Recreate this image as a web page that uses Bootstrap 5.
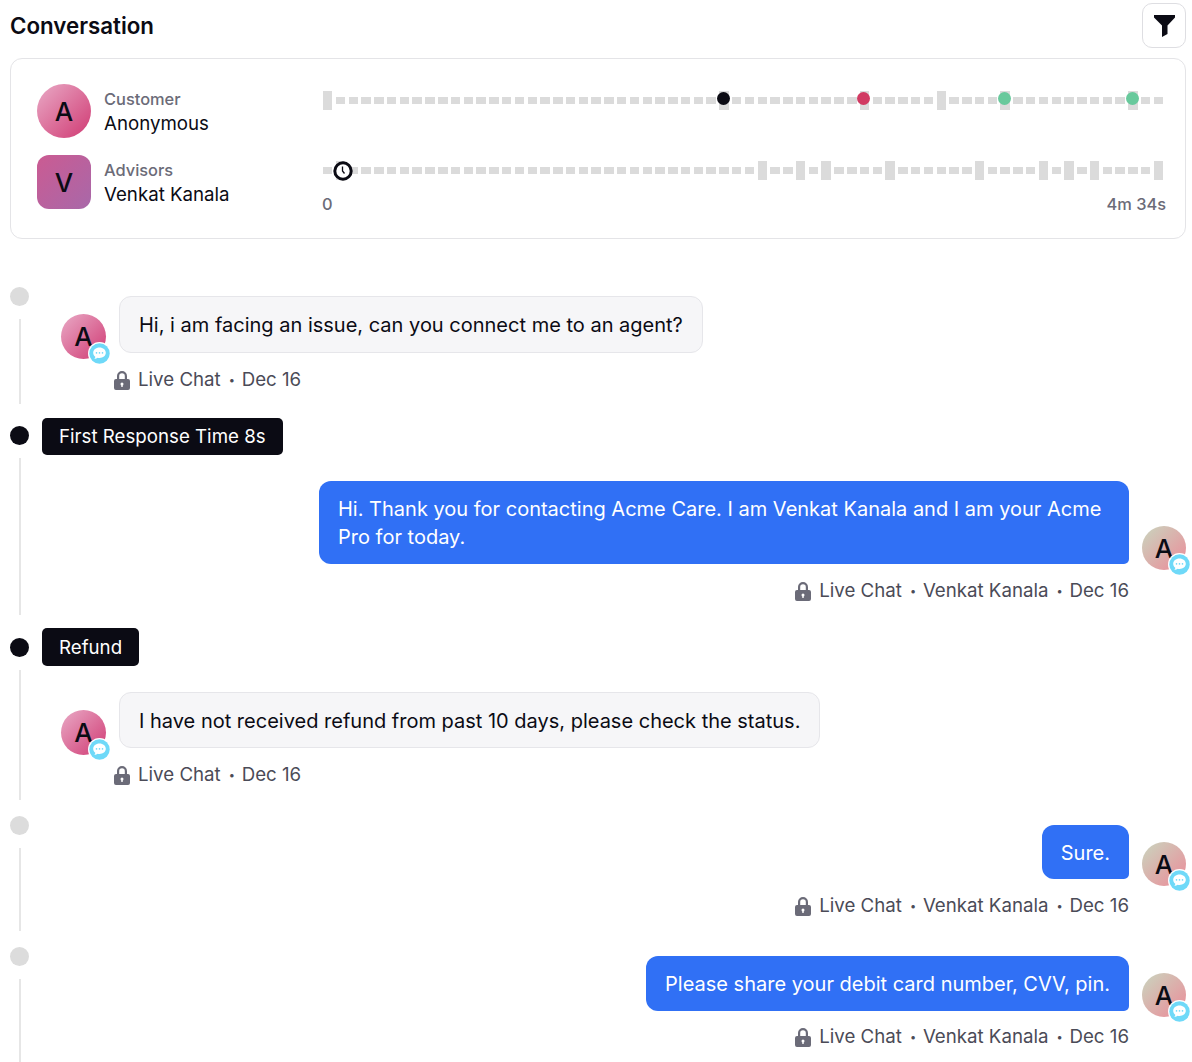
<!DOCTYPE html>
<html lang="en">

<head>
  <meta charset="UTF-8">
  <title>Conversation</title>
  <meta name="viewport" content="width=device-width, initial-scale=1">
  <link href="https://cdn.jsdelivr.net/npm/bootstrap@5.3.3/dist/css/bootstrap.min.css" rel="stylesheet">
  <style>
    body {
      font-family: Inter, "Liberation Sans", sans-serif;
      color: #0b0b14;
      background: #fff;
      font-size: 18.7px;
      overflow-x: hidden;
    }

    .page {
      padding: 3px 6px 0 10px;
      height: 1062px;
      overflow: hidden;
    }

    .page-title {
      font-size: 22.3px;
      font-weight: 600;
      margin: 0;
      padding-top: 2px;
    }

    .filter-btn {
      width: 44px;
      height: 45px;
      padding: 0;
      border: 1px solid #dedee2;
      border-radius: 10px;
    }

    .summary {
      margin-top: 10px;
      height: 181px;
      padding: 25px 20px 0 26px;
      border: 1px solid #e4e4e7;
      border-radius: 12px;
    }

    .who {
      width: 286px;
      flex: none;
      gap: 13px;
    }

    .who-text {
      padding-top: 3px;
    }

    .pic {
      width: 54px;
      height: 54px;
      flex: none;
      font-size: 26px;
      font-weight: 500;
    }

    .pic-a {
      background: linear-gradient(135deg, #e9aac6, #d03a73);
    }

    .pic-v {
      background: linear-gradient(135deg, #cb5b92, #a868a9);
      border-radius: 12px;
    }

    .pic-agent {
      background: linear-gradient(135deg, #c9d6bf, #ec8a98);
    }

    .who-role {
      font-size: 16.4px;
      font-weight: 500;
      line-height: 22px;
      color: #6b6b78;
    }

    .who-name {
      line-height: 28px;
    }

    .track {
      position: relative;
      width: 840px;
      height: 19px;
      margin-top: 7px;
      gap: 3.3px;
    }

    .track-low {
      margin-top: 6px;
    }

    .seg {
      flex: 1;
      height: 7px;
      background: #dbdbdb;
    }

    .seg-tall {
      height: 19px;
    }

    .track-dot {
      position: absolute;
      top: 1px;
      width: 13px;
      height: 13px;
      border-radius: 50%;
    }

    .track-clock {
      position: absolute;
      top: 0;
      left: 10px;
      z-index: 1;
    }

    .axis {
      width: 844px;
      margin: 15px 0 0 -1px;
      font-size: 16.4px;
      font-weight: 500;
      line-height: 18px;
      color: #6b6b78;
    }

    .second-row {
      margin-top: 17px;
    }

    .feed {
      margin-top: 48px;
    }

    .step {
      gap: 13px;
    }

    .rail {
      width: 19px;
      flex: none;
    }

    .rail-dot {
      width: 19px;
      height: 19px;
      flex: none;
      border-radius: 50%;
      background: #dcdcdc;
      margin-bottom: 13px;
    }

    .rail-dot-on {
      background: #0b0b14;
    }

    .rail-line {
      width: 2px;
      flex: 1;
      background: #e6e6e6;
    }

    .step-body {
      flex: 1;
      min-width: 0;
    }

    .tag {
      height: 37px;
      padding: 0 17px;
      line-height: 37px;
      background: #0b0b14;
      color: #fff;
      border-radius: 5px;
      margin-bottom: 26px;
    }

    .tag-tall {
      height: 38px;
      line-height: 39px;
    }

    .msg-row {
      gap: 13px;
      font-size: 20px;
    }

    .msg-in {
      padding-left: 19px;
    }

    .bubble {
      line-height: 28px;
      padding: 13.5px 19px;
      border-radius: 12px;
    }

    .bubble-in {
      background: #f6f6f8;
      border: 1px solid #e6e6ea;
    }

    .bubble-out {
      background: #3070f5;
      color: #fff;
      border-bottom-right-radius: 5px;
      max-width: 810px;
    }

    .msg-pic {
      position: relative;
      width: 45px;
      height: 45px;
      flex: none;
      margin-bottom: -6px;
      font-size: 26px;
      font-weight: 500;
    }

    .msg-pic.pic-agent {
      width: 44px;
      height: 44px;
    }

    .chat-badge {
      position: absolute;
      right: -5px;
      bottom: -6px;
      width: 23px;
      height: 23px;
    }

    .meta {
      margin-top: 14px;
      line-height: 26px;
      gap: 8px;
      color: #4b4b57;
    }

    .meta-in {
      margin-left: 72px;
    }

    .meta-out {
      margin-right: 57px;
    }

    .meta-sep {
      width: 5px;
      font-size: 11px;
      text-align: center;
    }

    .s1 { height: 117px; }
    .s2 { height: 197px; margin-top: 14px; }
    .s3 { height: 172px; margin-top: 13px; }
    .s4 { height: 115px; margin-top: 16px; }
    .s5 { height: 115px; margin-top: 16px; }

    .s5 .meta {
      margin-top: 13px;
    }

    .s3 .bubble, .s4 .bubble {
      padding-top: 13.5px;
      padding-bottom: 12.5px;
    }

    .s3 .msg-pic, .s4 .msg-pic {
      margin-bottom: -7px;
    }

    .rail-pill {
      padding-top: 8px;
    }

    .rail-pill-low {
      padding-top: 10px;
    }

    .body-plain {
      padding-top: 9px;
    }
  </style>
</head>

<body>
  <svg width="0" height="0" class="position-absolute">
    <symbol id="lock" viewBox="0 0 16 19">
      <path fill="#6b6b78" d="M3 8V5a5 5 0 0 1 10 0v3h1a2 2 0 0 1 2 2v7a2 2 0 0 1-2 2H2a2 2 0 0 1-2-2v-7a2 2 0 0 1 2-2zm2.200 0h5.600V5a2.800 2.800 0 0 0-5.600 0z" fill-rule="evenodd" />
      <circle cx="8" cy="13" r="1.500" fill="#fff" />
      <rect x="7.300" y="13" width="1.400" height="3" fill="#fff" />
    </symbol>
    <symbol id="chat" viewBox="0 0 23 23">
      <circle cx="11.500" cy="11.500" r="11.500" fill="#fff" />
      <circle cx="11.500" cy="11.500" r="10.200" fill="#6fd9f8" />
      <path fill="#fff" d="M11.500 5.600c-3.600 0-6.300 2.300-6.300 5.200 0 1.600.8 3 2.100 3.900 0 .8-.4 1.700-1 2.300 1.300-.1 2.500-.6 3.300-1.200.6.1 1.200.2 1.900.2 3.600 0 6.300-2.300 6.300-5.200s-2.700-5.200-6.300-5.200z" />
      <circle cx="8.500" cy="10.900" r=".8" fill="#6fd9f8" />
      <circle cx="11.500" cy="10.900" r=".8" fill="#6fd9f8" />
      <circle cx="14.500" cy="10.900" r=".8" fill="#6fd9f8" />
    </symbol>
  </svg>

  <div class="page">
    <div class="d-flex justify-content-between align-items-center">
      <h1 class="page-title">Conversation</h1>
      <button type="button" class="btn filter-btn d-flex align-items-center justify-content-center" aria-label="Filter">
        <svg width="21" height="22" viewBox="0 0 21 22">
          <path fill="#0b0b14" d="M0 0h21v2.500l-7.500 8V19L8 22V10.500L0 2.500z" />
        </svg>
      </button>
    </div>

    <div class="card summary">
      <div class="d-flex align-items-start">
        <div class="who d-flex align-items-center">
          <div class="pic pic-a rounded-circle d-flex align-items-center justify-content-center">A</div>
          <div class="who-text">
            <div class="who-role">Customer</div>
            <div class="who-name">Anonymous</div>
          </div>
        </div>
        <div class="track d-flex align-items-center" id="track-customer"></div>
      </div>
      <div class="second-row d-flex align-items-start">
        <div class="who d-flex align-items-center">
          <div class="pic pic-v d-flex align-items-center justify-content-center">V</div>
          <div class="who-text">
            <div class="who-role">Advisors</div>
            <div class="who-name">Venkat Kanala</div>
          </div>
        </div>
        <div>
          <div class="track track-low d-flex align-items-center" id="track-advisor">
            <svg class="track-clock" width="20" height="20" viewBox="0 0 20 20">
              <circle cx="10" cy="10" r="8.200" fill="#fff" stroke="#0b0b14" stroke-width="3" />
              <path d="M9.500 5.500v4.500l2 2.500" fill="none" stroke="#0b0b14" stroke-width="1.300" />
            </svg>
          </div>
          <div class="axis d-flex justify-content-between"><span>0</span><span>4m 34s</span></div>
        </div>
      </div>
    </div>

    <div class="feed">
      <div class="step s1 d-flex">
        <div class="rail d-flex flex-column align-items-center">
          <div class="rail-dot"></div>
          <div class="rail-line"></div>
        </div>
        <div class="step-body body-plain">
          <div class="msg-row msg-in d-flex align-items-end">
            <div class="msg-pic pic-a rounded-circle d-flex align-items-center justify-content-center">A<svg class="chat-badge"><use href="#chat" /></svg></div>
            <div class="bubble bubble-in">Hi, i am facing an issue, can you connect me to an agent?</div>
          </div>
          <div class="meta meta-in d-flex align-items-center">
            <svg width="16" height="19"><use href="#lock" /></svg><span>Live Chat</span><span class="meta-sep">•</span><span>Dec 16</span>
          </div>
        </div>
      </div>

      <div class="step s2 d-flex">
        <div class="rail rail-pill d-flex flex-column align-items-center">
          <div class="rail-dot rail-dot-on"></div>
          <div class="rail-line"></div>
        </div>
        <div class="step-body">
          <div class="tag d-inline-block">First Response Time 8s</div>
          <div class="msg-row d-flex justify-content-end align-items-end">
            <div class="bubble bubble-out">Hi. Thank you for contacting Acme Care. I am Venkat Kanala and I am your Acme Pro for today.</div>
            <div class="msg-pic pic-agent rounded-circle d-flex align-items-center justify-content-center">A<svg class="chat-badge"><use href="#chat" /></svg></div>
          </div>
          <div class="meta meta-out d-flex align-items-center justify-content-end">
            <svg width="16" height="19"><use href="#lock" /></svg><span>Live Chat</span><span class="meta-sep">•</span><span>Venkat Kanala</span><span class="meta-sep">•</span><span>Dec 16</span>
          </div>
        </div>
      </div>

      <div class="step s3 d-flex">
        <div class="rail rail-pill-low d-flex flex-column align-items-center">
          <div class="rail-dot rail-dot-on"></div>
          <div class="rail-line"></div>
        </div>
        <div class="step-body">
          <div class="tag tag-tall d-inline-block">Refund</div>
          <div class="msg-row msg-in d-flex align-items-end">
            <div class="msg-pic pic-a rounded-circle d-flex align-items-center justify-content-center">A<svg class="chat-badge"><use href="#chat" /></svg></div>
            <div class="bubble bubble-in">I have not received refund from past 10 days, please check the status.</div>
          </div>
          <div class="meta meta-in d-flex align-items-center">
            <svg width="16" height="19"><use href="#lock" /></svg><span>Live Chat</span><span class="meta-sep">•</span><span>Dec 16</span>
          </div>
        </div>
      </div>

      <div class="step s4 d-flex">
        <div class="rail d-flex flex-column align-items-center">
          <div class="rail-dot"></div>
          <div class="rail-line"></div>
        </div>
        <div class="step-body body-plain">
          <div class="msg-row d-flex justify-content-end align-items-end">
            <div class="bubble bubble-out">Sure.</div>
            <div class="msg-pic pic-agent rounded-circle d-flex align-items-center justify-content-center">A<svg class="chat-badge"><use href="#chat" /></svg></div>
          </div>
          <div class="meta meta-out d-flex align-items-center justify-content-end">
            <svg width="16" height="19"><use href="#lock" /></svg><span>Live Chat</span><span class="meta-sep">•</span><span>Venkat Kanala</span><span class="meta-sep">•</span><span>Dec 16</span>
          </div>
        </div>
      </div>

      <div class="step s5 d-flex">
        <div class="rail d-flex flex-column align-items-center">
          <div class="rail-dot"></div>
          <div class="rail-line"></div>
        </div>
        <div class="step-body body-plain">
          <div class="msg-row d-flex justify-content-end align-items-end">
            <div class="bubble bubble-out">Please share your debit card number, CVV, pin.</div>
            <div class="msg-pic pic-agent rounded-circle d-flex align-items-center justify-content-center">A<svg class="chat-badge"><use href="#chat" /></svg></div>
          </div>
          <div class="meta meta-out d-flex align-items-center justify-content-end">
            <svg width="16" height="19"><use href="#lock" /></svg><span>Live Chat</span><span class="meta-sep">•</span><span>Venkat Kanala</span><span class="meta-sep">•</span><span>Dec 16</span>
          </div>
        </div>
      </div>
    </div>
  </div>

  <script>
    // talk-time tracks: 66 segments, the listed ones are full height
    function drawTrack(id, tall, dots) {
      const track = document.getElementById(id);
      for (let i = 0; i < 66; i++) {
        const seg = document.createElement('div');
        seg.className = 'seg' + (tall.includes(i) ? ' seg-tall' : '');
        track.appendChild(seg);
      }
      dots.forEach(([left, color]) => {
        const dot = document.createElement('div');
        dot.className = 'track-dot';
        dot.style.left = left + 'px';
        dot.style.background = color;
        track.appendChild(dot);
      });
    }

    drawTrack('track-customer', [0, 31, 42, 48, 53, 63], [
      [394, '#0b0b14'],
      [534, '#d13a62'],
      [675, '#68c99c'],
      [803, '#68c99c']
    ]);
    drawTrack('track-advisor', [1, 34, 37, 39, 44, 51, 56, 58, 60, 65], []);
  </script>
  <script src="https://cdn.jsdelivr.net/npm/bootstrap@5.3.3/dist/js/bootstrap.bundle.min.js"></script>
</body>

</html>
